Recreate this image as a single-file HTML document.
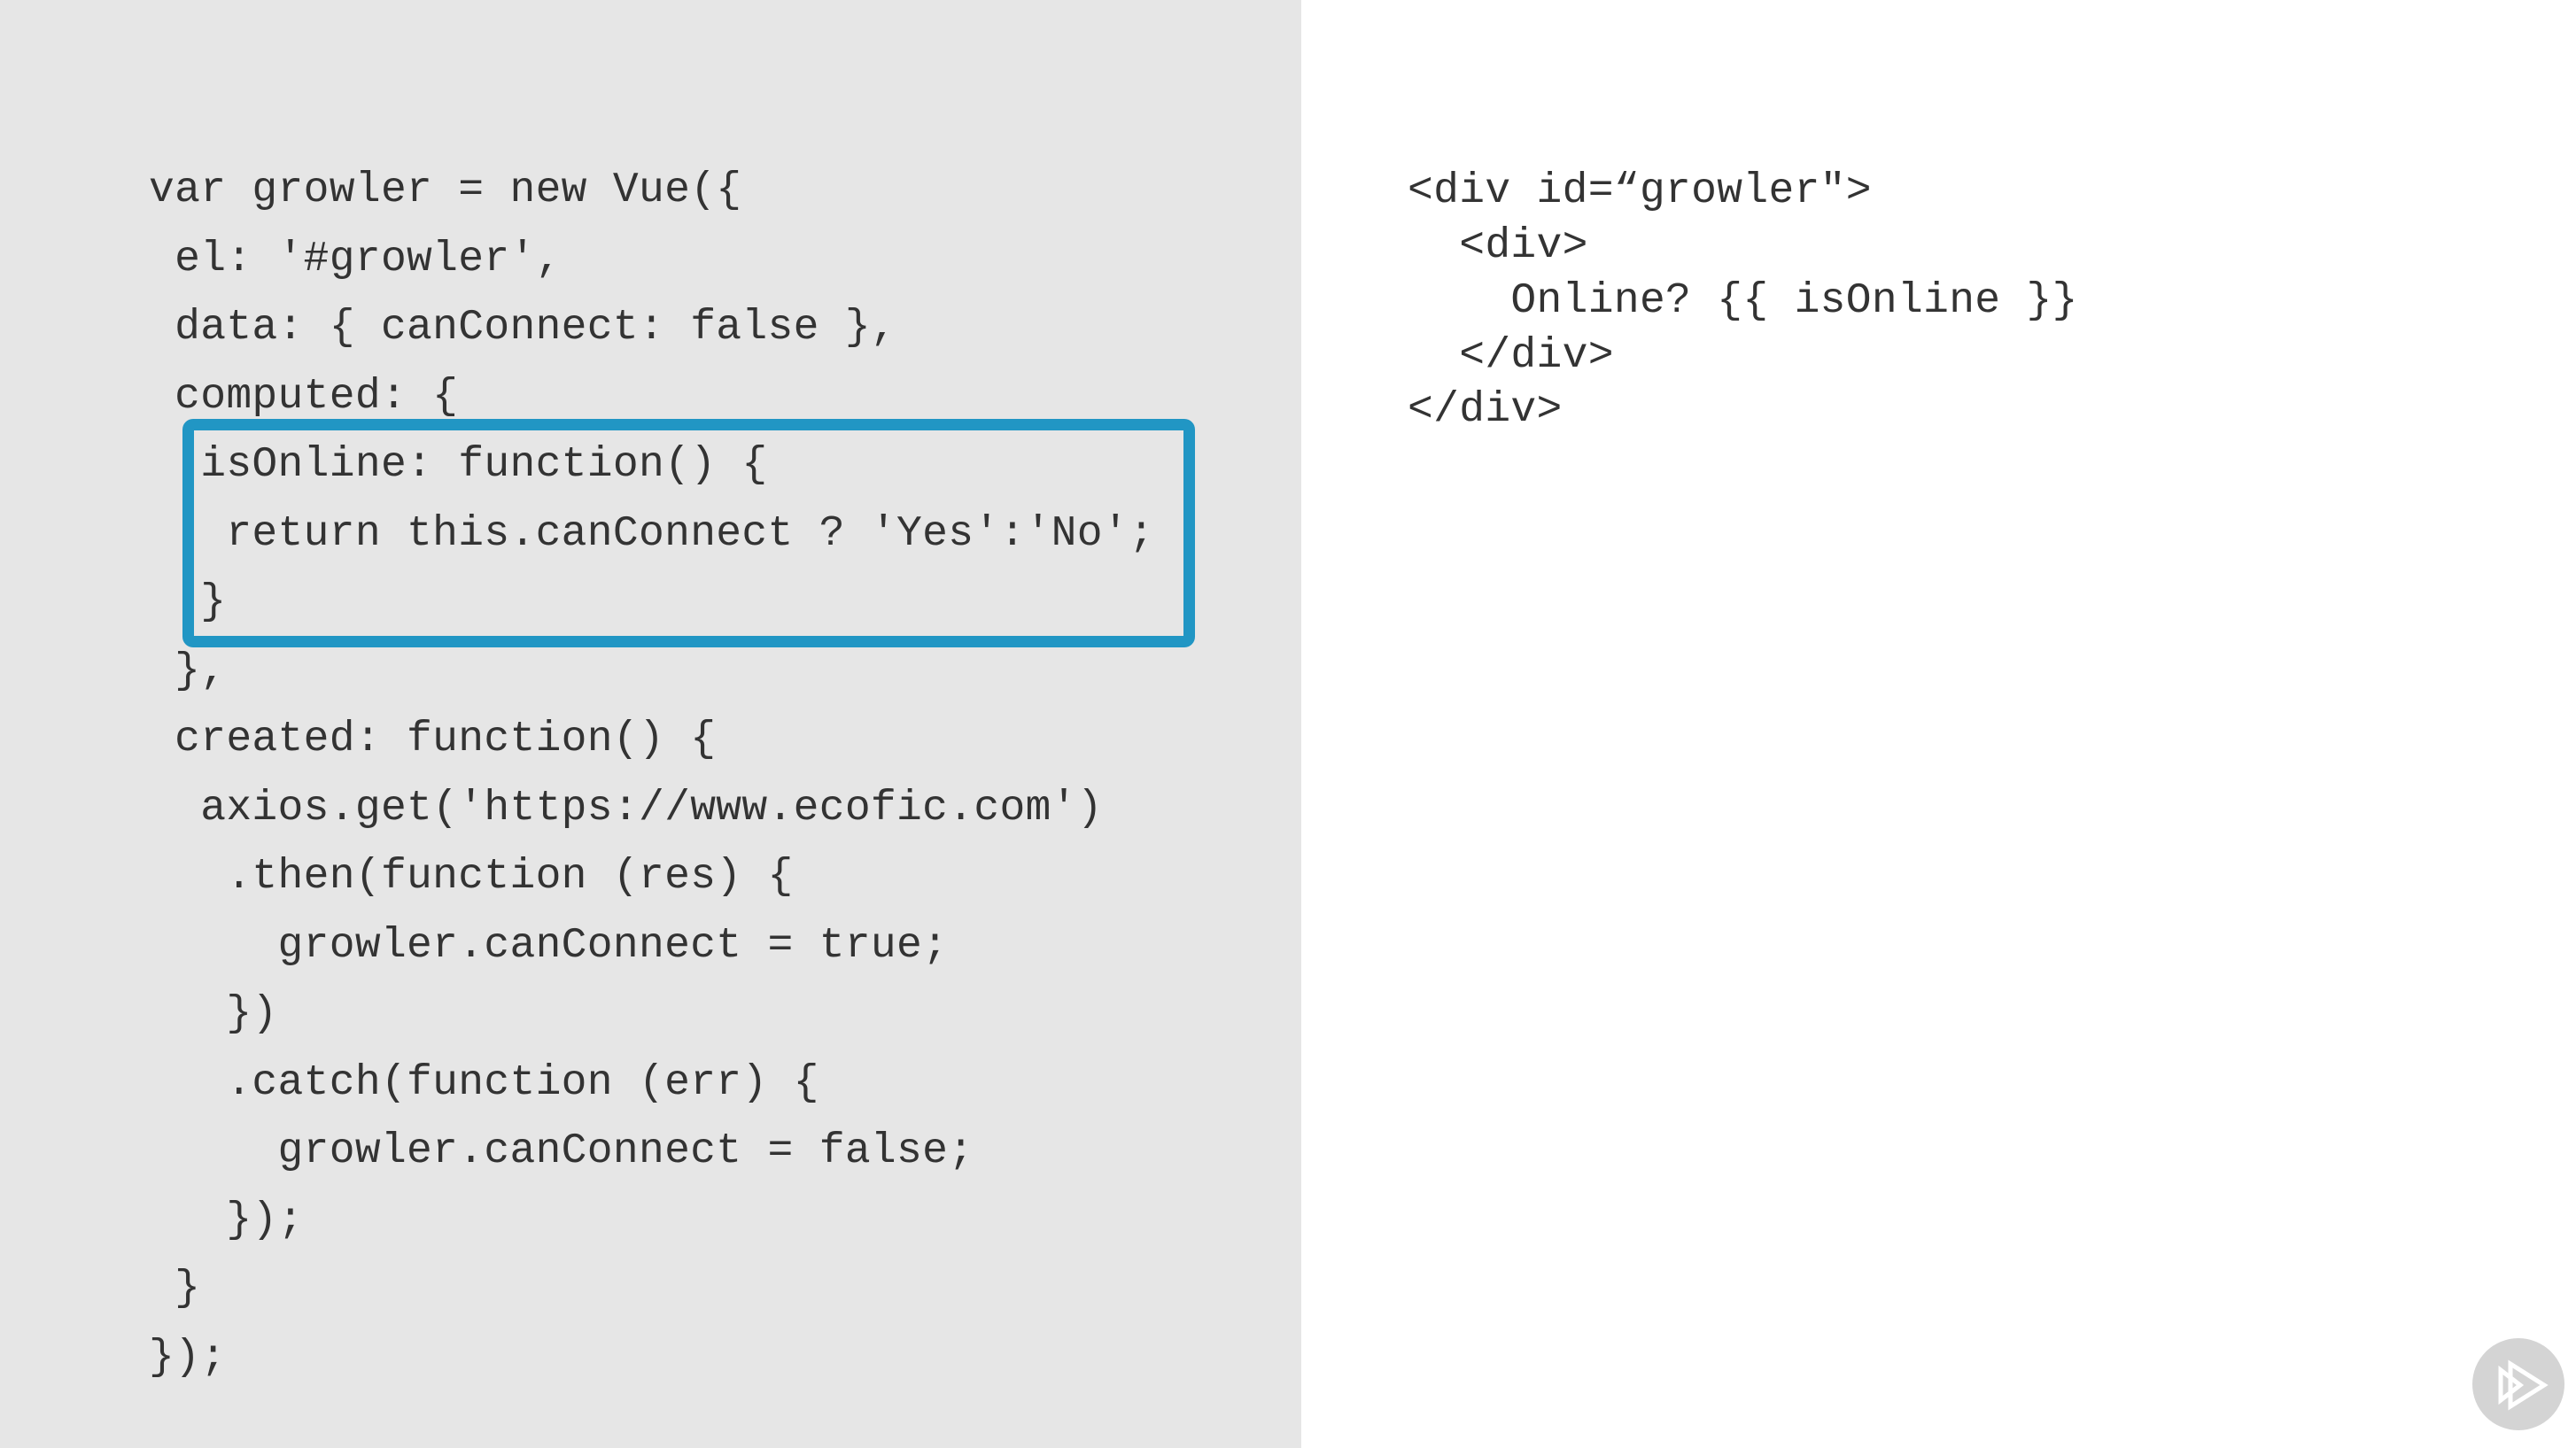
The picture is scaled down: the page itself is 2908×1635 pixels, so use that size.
<!DOCTYPE html>
<html><head><meta charset="utf-8"><style>
html,body{margin:0;padding:0;}
body{width:2908px;height:1635px;position:relative;overflow:hidden;background:#fff;font-family:"Liberation Mono",monospace;color:#333;}
#left{position:absolute;left:0;top:0;width:1469px;height:1635px;background:#e6e6e6;}
.l{position:absolute;font-size:48px;line-height:1;white-space:pre;letter-spacing:0.3px;}
#box{position:absolute;left:206px;top:473px;width:1117px;height:232px;border:13px solid #2196c4;border-radius:12px;}
</style></head><body>
<div id="left"></div>
<div id="box"></div>
<div class="l" style="left:168px;top:191px">var growler = new Vue({</div>
<div class="l" style="left:168px;top:269px"> el: '#growler',</div>
<div class="l" style="left:168px;top:346px"> data: { canConnect: false },</div>
<div class="l" style="left:168px;top:424px"> computed: {</div>
<div class="l" style="left:168px;top:501px">  isOnline: function() {</div>
<div class="l" style="left:168px;top:579px">   return this.canConnect ? 'Yes':'No';</div>
<div class="l" style="left:168px;top:656px">  }</div>
<div class="l" style="left:168px;top:734px"> },</div>
<div class="l" style="left:168px;top:811px"> created: function() {</div>
<div class="l" style="left:168px;top:889px">  axios.get('https://www.ecofic.com')</div>
<div class="l" style="left:168px;top:966px">   .then(function (res) {</div>
<div class="l" style="left:168px;top:1044px">     growler.canConnect = true;</div>
<div class="l" style="left:168px;top:1121px">   })</div>
<div class="l" style="left:168px;top:1199px">   .catch(function (err) {</div>
<div class="l" style="left:168px;top:1276px">     growler.canConnect = false;</div>
<div class="l" style="left:168px;top:1354px">   });</div>
<div class="l" style="left:168px;top:1431px"> }</div>
<div class="l" style="left:168px;top:1509px">});</div>

<div class="l" style="left:1589px;top:192px">&lt;div id=“growler"&gt;</div>
<div class="l" style="left:1589px;top:254px">  &lt;div&gt;</div>
<div class="l" style="left:1589px;top:316px">    Online? {{ isOnline }}</div>
<div class="l" style="left:1589px;top:378px">  &lt;/div&gt;</div>
<div class="l" style="left:1589px;top:439px">&lt;/div&gt;</div>

<svg style="position:absolute;left:2790px;top:1510px" width="106" height="106" viewBox="0 0 106 106">
<circle cx="53" cy="53" r="52" fill="#d4d4d4"/>
<g fill="none" stroke="#fff" stroke-width="5" stroke-linejoin="miter">
<path d="M33 37 L33 71 L55 54 Z"/>
<path d="M44 30 L44 78 L82 54 Z"/>
</g>
</svg>
</body></html>
